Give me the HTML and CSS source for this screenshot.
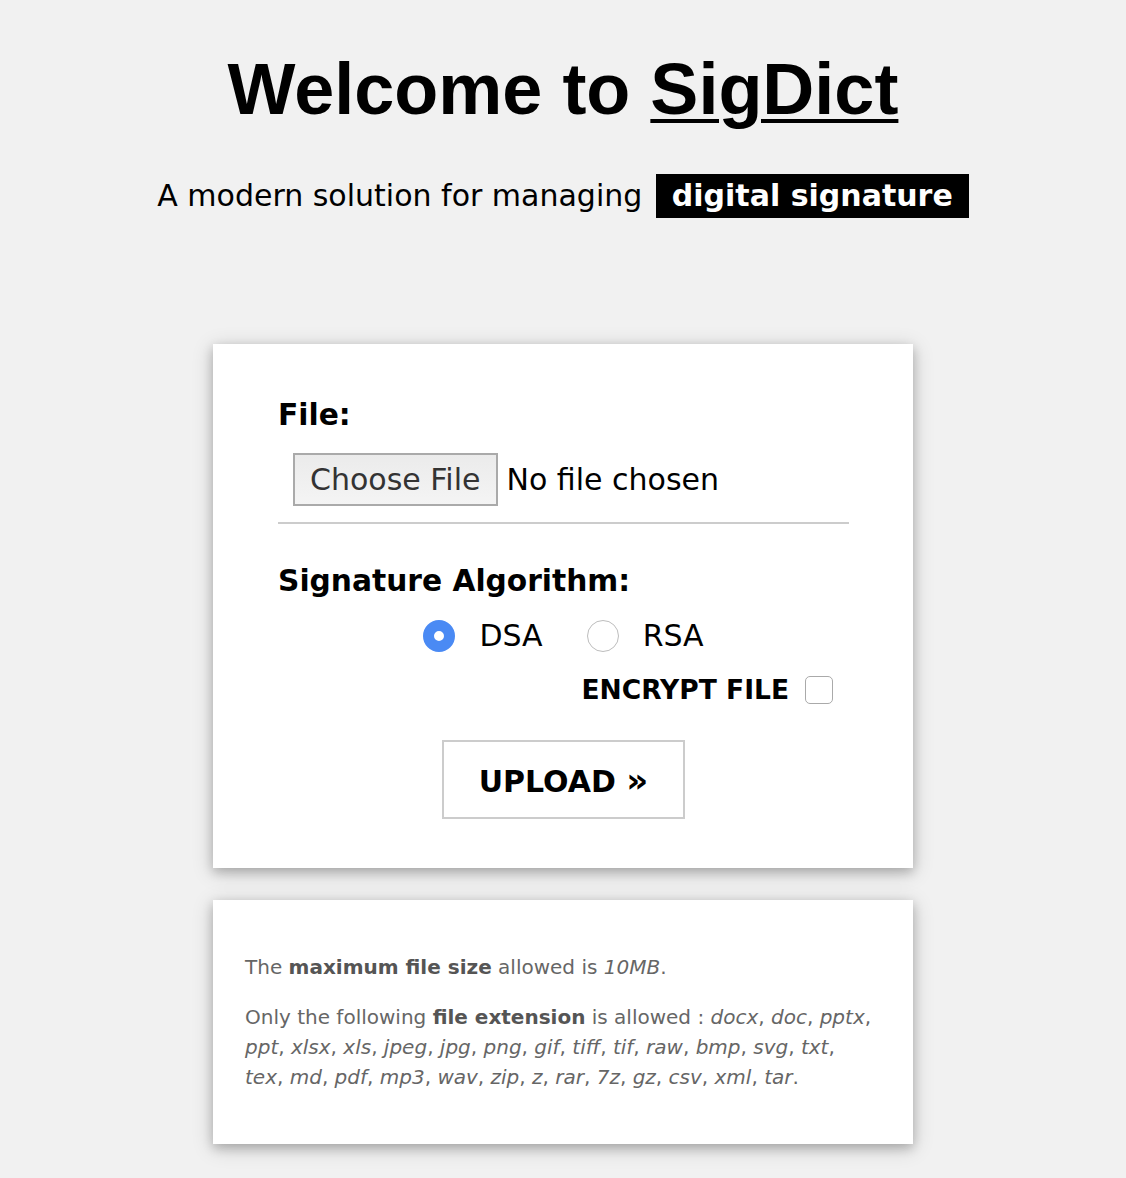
FILE: index.html
```html
<!DOCTYPE html>
<html>
<head>
<meta charset="utf-8">
<link rel="stylesheet" href="styles.css">
</head>
<body>
<header class="hero">
  <h1 class="title">Welcome to <a class="brand" href="#">SigDict</a></h1>
  <p class="subtitle">A modern solution for managing <span class="tag">digital signature</span></p>
</header>
<main class="main">
  <form class="card form-card">
    <label class="label">File:</label>
    <div class="file-row">
      <input class="file" type="file">
    </div>
    <hr class="sep">
    <label class="label">Signature Algorithm:</label>
    <div class="radios">
      <label class="opt"><input class="radio" type="radio" name="alg" checked><span>DSA</span></label>
      <label class="opt"><input class="radio" type="radio" name="alg"><span>RSA</span></label>
    </div>
    <div class="encrypt">
      <span class="enc-label">ENCRYPT FILE</span>
      <input class="check" type="checkbox">
    </div>
    <div class="submit-row">
      <button class="upload" type="button">UPLOAD <span class="raquo">&raquo;</span></button>
    </div>
  </form>
  <section class="card info-card">
    <p class="info">The <b>maximum file size</b> allowed is <i>10MB</i>.</p>
    <p class="info">Only the following <b>file extension</b> is allowed : <i>docx</i>, <i>doc</i>, <i>pptx</i>, <i>ppt</i>, <i>xlsx</i>, <i>xls</i>, <i>jpeg</i>, <i>jpg</i>, <i>png</i>, <i>gif</i>, <i>tiff</i>, <i>tif</i>, <i>raw</i>, <i>bmp</i>, <i>svg</i>, <i>txt</i>, <i>tex</i>, <i>md</i>, <i>pdf</i>, <i>mp3</i>, <i>wav</i>, <i>zip</i>, <i>z</i>, <i>rar</i>, <i>7z</i>, <i>gz</i>, <i>csv</i>, <i>xml</i>, <i>tar</i>.</p>
  </section>
</main>
</body>
</html>
```
FILE: styles.css
```css
html, body {
  margin: 0;
  padding: 0;
  background: #f1f1f1;
}
body {
  font-family: "DejaVu Sans", sans-serif;
  color: #000;
}
.hero {
  text-align: center;
  padding-top: 46px;
}
.title {
  font-family: "Liberation Sans", Arial, sans-serif;
  font-weight: 700;
  font-size: 72px;
  line-height: 86px;
  margin: 0;
}
.brand {
  color: #000;
  text-decoration: underline;
  text-decoration-thickness: 4px;
  text-underline-offset: 5px;
}
.subtitle {
  font-size: 30px;
  margin: 42px 0 0;
  line-height: 44px;
}
.tag {
  display: inline-block;
  background: #000;
  color: #fff;
  font-weight: 700;
  padding: 0 16px;
  margin-left: 4px;
  line-height: 44px;
}
.main {
  display: flex;
  flex-direction: column;
  align-items: center;
  gap: 32px;
  padding-top: 126px;
  padding-bottom: 34px;
}
.card {
  width: 700px;
  box-sizing: border-box;
  background: #fff;
  box-shadow: 0 4px 10px 0 rgba(0,0,0,0.2), 0 4px 20px 0 rgba(0,0,0,0.19);
}
.form-card {
  padding: 53px 64px 49px 65px;
  display: flex;
  flex-direction: column;
}
.label {
  font-weight: 700;
  font-size: 29.7px;
  line-height: 36px;
}
.file-row {
  padding: 20px 0 16px 15px;
}
.file {
  font-family: "DejaVu Sans", sans-serif;
  font-size: 30px;
  color: #000;
}
.file::file-selector-button {
  font-family: "DejaVu Sans", sans-serif;
  font-size: 30px;
  color: #333;
  background: linear-gradient(#ebebeb, #f4f4f4);
  border: 2px solid #aaa;
  padding: 4px 15px;
  margin-right: 9px;
  height: 53px;
}
.sep {
  border: 0;
  border-top: 2px solid #ccc;
  margin: 0 0 39px;
}
.radios {
  display: flex;
  justify-content: center;
  gap: 44px;
  margin-top: 19px;
}
.opt {
  display: flex;
  align-items: center;
  gap: 24px;
  font-size: 30px;
}
.radio {
  appearance: none;
  margin: 0;
  width: 32px;
  height: 32px;
  border-radius: 50%;
  border: 1.5px solid #bdbdbd;
  background: #fff;
  box-sizing: border-box;
}
.radio:checked {
  border: 11px solid #4a8af4;
  background: #fff;
}
.encrypt {
  display: flex;
  justify-content: flex-end;
  align-items: center;
  gap: 16px;
  padding-right: 16px;
  margin-top: 21px;
}
.enc-label {
  font-weight: 700;
  font-size: 26.5px;
}
.check {
  appearance: none;
  margin: 0;
  width: 28px;
  height: 28px;
  border: 1.5px solid #aaa;
  border-radius: 5px;
  background: #fff;
  box-sizing: border-box;
}
.submit-row {
  display: flex;
  justify-content: center;
  margin-top: 35px;
}
.upload {
  width: 243px;
  height: 79px;
  background: #fff;
  border: 2px solid #ccc;
  font-family: "DejaVu Sans", sans-serif;
  font-weight: 700;
  font-size: 30px;
  color: #000;
  cursor: pointer;
}
.raquo {
  font-size: 34px;
}
.info-card {
  padding: 52px 38px 52px 32px;
}
.info {
  margin: 0;
  font-size: 20px;
  line-height: 30px;
  color: #666;
}
.info + .info {
  margin-top: 20px;
}
.info b { color: #555; }
```
